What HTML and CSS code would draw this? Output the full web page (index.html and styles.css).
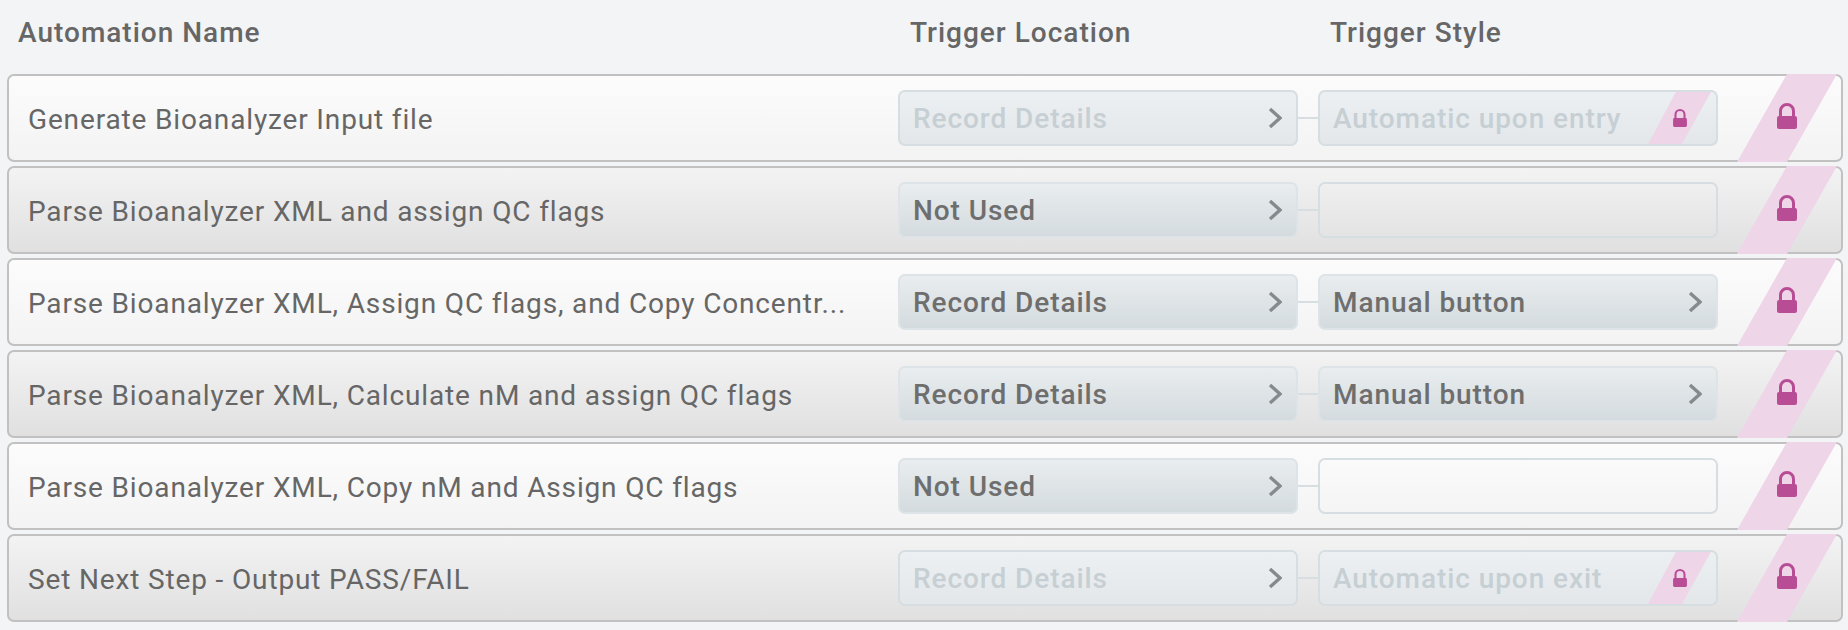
FILE: index.html
```html
<!DOCTYPE html>
<html lang="en">
<head>
<meta charset="UTF-8">
<meta name="viewport" content="width=device-width, initial-scale=1.0">
<title>Automations</title>
<link rel="stylesheet" href="styles.css">
</head>
<body>
  <svg class="defs" width="0" height="0">
    <symbol id="chevron" viewBox="0 0 14 22">
      <path d="M2 2 L12 11 L2 20" fill="none" stroke="currentColor" stroke-width="3.4"/>
    </symbol>
    <symbol id="lock" viewBox="0 0 20 26">
      <path d="M3.5 14 V8 a6.5 6.5 0 0 1 13 0 V14" fill="none" stroke="currentColor" stroke-width="3"/>
      <rect x="0" y="13" width="20" height="13" rx="2" fill="currentColor"/>
    </symbol>
  </svg>

  <div class="header">
    <div class="name-col">Automation Name</div>
    <div class="location-col">Trigger Location</div>
    <div class="style-col">Trigger Style</div>
  </div>

  <div class="list">
    <div class="row light">
      <div class="name">Generate Bioanalyzer Input file</div>
      <div class="select disabled"><span>Record Details</span><svg class="chevron"><use href="#chevron"/></svg></div>
      <div class="connector"></div>
      <div class="select disabled">
        <span>Automatic upon entry</span>
        <div class="stripe small"><svg class="lock-small"><use href="#lock"/></svg></div>
      </div>
      <div class="stripe big"><svg class="lock-big"><use href="#lock"/></svg></div>
    </div>

    <div class="row dark">
      <div class="name">Parse Bioanalyzer XML and assign QC flags</div>
      <div class="select"><span>Not Used</span><svg class="chevron"><use href="#chevron"/></svg></div>
      <div class="connector"></div>
      <div class="select empty"></div>
      <div class="stripe big"><svg class="lock-big"><use href="#lock"/></svg></div>
    </div>

    <div class="row light">
      <div class="name">Parse Bioanalyzer XML, Assign QC flags, and Copy Concentr...</div>
      <div class="select"><span>Record Details</span><svg class="chevron"><use href="#chevron"/></svg></div>
      <div class="connector"></div>
      <div class="select"><span>Manual button</span><svg class="chevron"><use href="#chevron"/></svg></div>
      <div class="stripe big"><svg class="lock-big"><use href="#lock"/></svg></div>
    </div>

    <div class="row dark">
      <div class="name">Parse Bioanalyzer XML, Calculate nM and assign QC flags</div>
      <div class="select"><span>Record Details</span><svg class="chevron"><use href="#chevron"/></svg></div>
      <div class="connector"></div>
      <div class="select"><span>Manual button</span><svg class="chevron"><use href="#chevron"/></svg></div>
      <div class="stripe big"><svg class="lock-big"><use href="#lock"/></svg></div>
    </div>

    <div class="row light">
      <div class="name">Parse Bioanalyzer XML, Copy nM and Assign QC flags</div>
      <div class="select"><span>Not Used</span><svg class="chevron"><use href="#chevron"/></svg></div>
      <div class="connector"></div>
      <div class="select empty"></div>
      <div class="stripe big"><svg class="lock-big"><use href="#lock"/></svg></div>
    </div>

    <div class="row dark">
      <div class="name">Set Next Step - Output PASS/FAIL</div>
      <div class="select disabled"><span>Record Details</span><svg class="chevron"><use href="#chevron"/></svg></div>
      <div class="connector"></div>
      <div class="select disabled">
        <span>Automatic upon exit</span>
        <div class="stripe small"><svg class="lock-small"><use href="#lock"/></svg></div>
      </div>
      <div class="stripe big"><svg class="lock-big"><use href="#lock"/></svg></div>
    </div>
  </div>
</body>
</html>
```

FILE: styles.css
```css
body {
  margin: 0;
  padding: 0 5px 0 7px;
  background: #f3f4f6;
  font-family: Roboto, "Liberation Sans", sans-serif;
  color: #666;
  overflow: hidden;
}

.defs {
  position: absolute;
}

.header {
  display: flex;
  height: 74px;
  padding-top: 15px;
  box-sizing: border-box;
  font-size: 28px;
  font-weight: 500;
  letter-spacing: 1px;
  line-height: 36px;
}

.name-col {
  width: 903px;
  padding-left: 11px;
  box-sizing: border-box;
}

.location-col {
  width: 420px;
}

.list {
  display: flex;
  flex-direction: column;
  gap: 4px;
}

.row {
  position: relative;
  display: flex;
  align-items: center;
  height: 88px;
  box-sizing: border-box;
  border: 2px solid #c1c1c1;
  border-radius: 7px;
  padding-left: 19px;
}

.light {
  background: linear-gradient(#fcfcfc, #f3f3f3);
}

.dark {
  background: linear-gradient(#f3f3f3, #e0e0e0);
}

.name {
  width: 870px;
  flex-shrink: 0;
  padding-top: 3px;
  font-size: 28px;
  letter-spacing: 0.85px;
  white-space: nowrap;
}

.select {
  position: relative;
  display: flex;
  align-items: center;
  justify-content: space-between;
  width: 400px;
  height: 56px;
  box-sizing: border-box;
  padding: 0 14px 0 13px;
  border: 2px solid #dde3e6;
  border-radius: 7px;
  background: linear-gradient(#e9edef, #d4dbde);
  font-size: 28px;
  font-weight: 500;
  letter-spacing: 0.93px;
  color: #6e6e6e;
  overflow: hidden;
}

.disabled {
  border-color: #d6dee1;
  background: linear-gradient(#ecf0f2, #e3e7ea);
  color: #c6cfd3;
}

.empty {
  border-color: #d6dee1;
  background: none;
}

.connector {
  width: 20px;
  height: 2px;
  flex-shrink: 0;
  background: #d6dee1;
}

.chevron {
  width: 14px;
  height: 22px;
  color: #858a8c;
}

.stripe {
  position: absolute;
  display: flex;
  align-items: center;
  justify-content: center;
  background: #eed5e8;
  color: #b84d96;
}

.big {
  top: -2px;
  bottom: -2px;
  right: 4px;
  width: 100px;
  clip-path: polygon(50% 0, 100% 0, 50% 100%, 0 100%);
}

.small {
  top: -2px;
  bottom: -2px;
  right: 4px;
  width: 65px;
  clip-path: polygon(46% 0, 100% 0, 52% 100%, 0 100%);
}

.lock-big {
  width: 20px;
  height: 26px;
  margin-bottom: 4px;
}

.lock-small {
  width: 14px;
  height: 18px;
}
```
